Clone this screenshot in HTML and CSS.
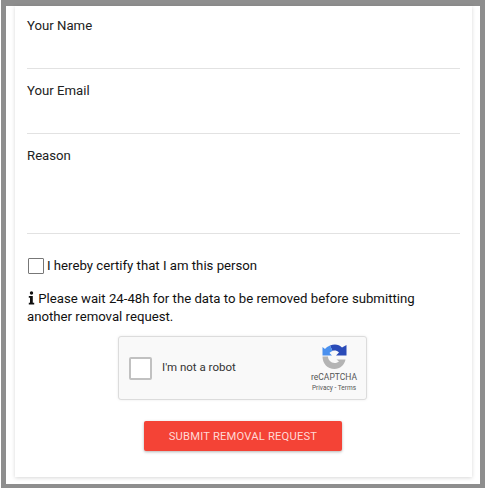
FILE: index.html
```html
<!DOCTYPE html>
<html lang="en">
<head>
  <meta charset="UTF-8">
  <title>Removal Request</title>
  <link rel="stylesheet" href="styles.css">
</head>
<body>

  <div class="frame">
    <form class="card">
      <div class="field field-short"><label>Your Name</label></div>
      <div class="field field-short"><label>Your Email</label></div>
      <div class="field field-tall"><label>Reason</label></div>

      <div class="certify">
        <span class="box"></span>
        <span>I hereby certify that I am this person</span>
      </div>

      <p class="notice">
        <svg class="info" viewBox="0 0 7 14" width="7" height="14">
          <circle cx="3.500" cy="2" r="1.700" fill="#111"/>
          <path d="M.8 5h4v6.800H6.200V13.500H.8v-1.700h1.200V6.700H.8z" fill="#111"/>
        </svg>
        Please wait 24-48h for the data to be removed before submitting another removal request.
      </p>

      <div class="captcha">
        <span class="captcha-box"></span>
        <span class="captcha-text">I'm not a robot</span>
        <div class="captcha-logo">
          <svg viewBox="0 0 25 25" width="25" height="25">
            <path d="M8 1.500C13-.5 17 .5 20 3.500L24.500 1V11.500H14L17 8.500C15 6.500 12.500 6 10.500 7z" fill="#2a4bb8"/>
            <path d="M8 1.500L10.500 7C9 7.500 8 8.500 7.500 9L10 11.500H.5V3L3 5C4 3.500 6 2.300 8 1.500z" fill="#4a90ee"/>
            <path d="M.5 12.500H6C6 16 9 19 12.500 19C14.500 19 16 18.300 17 17.500L14.500 15.500H23.500C22.500 21 18 25 12.500 25C5.500 25 .5 19.500 .5 12.500z" fill="#b4b4b4"/>
          </svg>
          <span class="captcha-name">reCAPTCHA</span>
          <span class="captcha-links">Privacy - Terms</span>
        </div>
      </div>

      <button type="button" class="submit">Submit Removal Request</button>
    </form>
  </div>

</body>
</html>
```

FILE: styles.css
```css
* {
  box-sizing: border-box;
}

body {
  margin: 0;
  background: #fff;
  font-family: Roboto, "Liberation Sans", sans-serif;
  font-size: 13.2px;
  color: #222;
}

.frame {
  width: 484px;
  height: 488px;
  margin-left: 1px;
  padding: 0 8px 7px 9px;
  border: 5px solid #8e8e8e;
  border-top-width: 6px;
  border-bottom-width: 4px;
}

.card {
  height: 100%;
  padding: 0 12px;
  background: #fff;
  box-shadow: 0 1px 4px rgba(0, 0, 0, 0.16);
}

.field {
  border-bottom: 1px solid #e2e2e2;
  padding-top: 14px;
}

.field label {
  display: block;
  line-height: 16px;
}

.field-short {
  height: 65px;
}

.field-short:first-child {
  height: 63px;
  padding-top: 12px;
}

.field-tall {
  height: 100px;
}

.certify {
  display: flex;
  align-items: center;
  gap: 3px;
  margin: 23px 0 0 1px;
  line-height: 17px;
  color: #111;
}

.box {
  width: 16px;
  height: 16px;
  border: 1.5px solid #777;
  border-radius: 1px;
}

.notice {
  margin: 16px 0 0;
  line-height: 18px;
  color: #111;
}

.info {
  margin-left: 1px;
  vertical-align: -2px;
}

.captcha {
  display: flex;
  align-items: center;
  width: 249px;
  height: 64px;
  margin: 10px 0 0 91px;
  padding: 0 9px 0 10px;
  background: #f9f9f9;
  border: 1px solid #dcdcdc;
  border-radius: 3px;
  box-shadow: 0 0 3px rgba(0, 0, 0, 0.08);
}

.captcha-box {
  width: 23px;
  height: 23px;
  background: #fff;
  border: 2px solid #c1c1c1;
  border-radius: 2px;
}

.captcha-text {
  flex: 1;
  margin: 0 0 2px 10px;
  font-size: 11.5px;
  color: #333;
}

.captcha-logo {
  display: flex;
  flex-direction: column;
  align-items: center;
  width: 46px;
  color: #555;
}

.captcha-name {
  margin-top: 3px;
  font-size: 8.5px;
  line-height: 11px;
}

.captcha-links {
  font-size: 6.5px;
  line-height: 10px;
}

.submit {
  display: block;
  width: 198px;
  height: 30px;
  margin: 21px 0 0 117px;
  padding: 0;
  background: #f44336;
  color: #ffd9d5;
  border: none;
  border-radius: 2px;
  font-family: inherit;
  font-size: 11.2px;
  letter-spacing: 0.2px;
  text-transform: uppercase;
  box-shadow: 0 1px 3px rgba(0, 0, 0, 0.3);
}
```
